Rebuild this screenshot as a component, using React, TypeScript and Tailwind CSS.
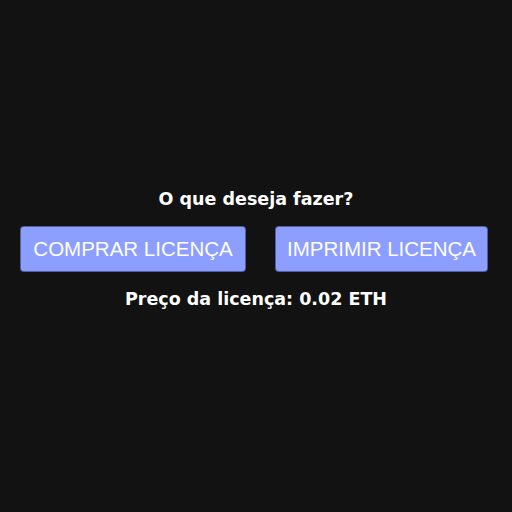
export default function App() {
  return (
    <div className="min-h-screen w-full bg-[#121212] flex flex-col items-center justify-center pb-[14px] font-['DejaVu_Sans',sans-serif] text-white">
      <h2 className="text-[17.5px] leading-[24px] font-bold mb-[15px]">O que deseja fazer?</h2>

      <div className="flex items-center gap-[29px] pr-1">
        <button className="h-[46px] w-[226px] rounded bg-[#8c9eff] border border-black/40 text-[20.5px] font-['Liberation_Sans',Arial,sans-serif] text-white">
          COMPRAR LICENÇA
        </button>
        <button className="h-[46px] w-[213px] rounded bg-[#8c9eff] border border-black/40 text-[20.5px] font-['Liberation_Sans',Arial,sans-serif] text-white">
          IMPRIMIR LICENÇA
        </button>
      </div>

      <p className="text-[17.5px] leading-[24px] font-bold mt-[15px]">Preço da licença: 0.02 ETH</p>
    </div>
  );
}
